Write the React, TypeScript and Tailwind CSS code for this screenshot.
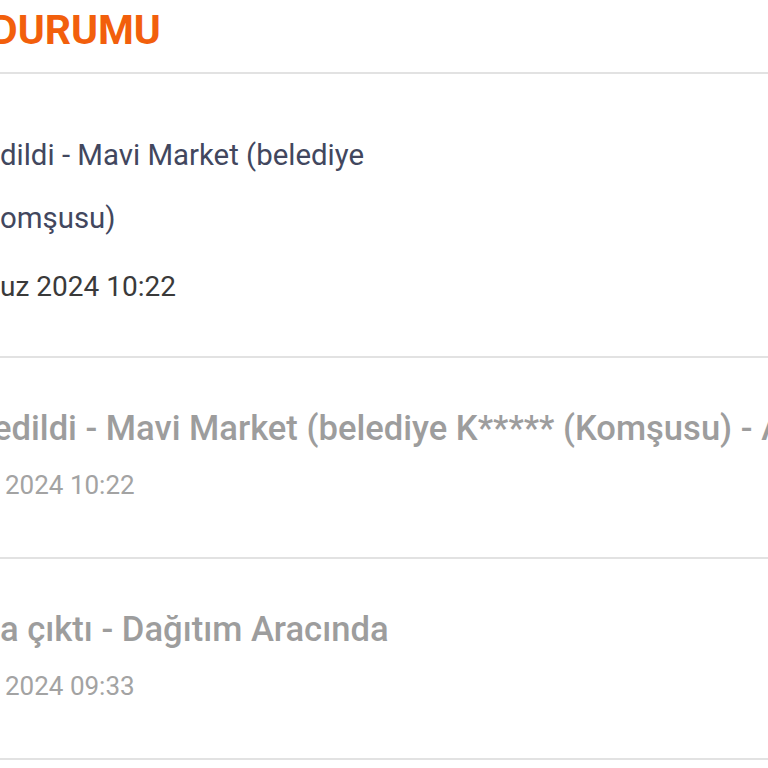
import React from 'react';

interface TrackingStep {
  text: string;
  date: string;
  offset: string;
}

const pastSteps: TrackingStep[] = [
  { text: 'edildi - Mavi Market (belediye K***** (Komşusu) - Adrese Teslim', date: '2024 10:22', offset: '-ml-[7px]' },
  { text: 'a çıktı - Dağıtım Aracında', date: '2024 09:33', offset: 'ml-0' },
];

const StepRow: React.FC<{ step: TrackingStep }> = ({ step }) => (
  <div className="border-b-2 border-[#e2e2e2] pt-[50px] pb-[56px]">
    <p className={`${step.offset} whitespace-nowrap text-[34.6px] leading-[40px] font-medium text-[#9d9d9d]`}>
      {step.text}
    </p>
    <p className="mt-[21px] pl-[5px] whitespace-nowrap text-[26px] leading-[32px] text-[#a3a3a3]">{step.date}</p>
  </div>
);

const App: React.FC = () => {
  return (
    <div className="h-[768px] w-[768px] overflow-hidden bg-white font-['Roboto',sans-serif]">
      <div className="border-b-2 border-[#e2e2e2] pt-[6px] pb-[18px]">
        <h1 className="-ml-[9px] text-[41px] leading-[48px] font-bold text-[#f25f0c]">DURUMU</h1>
      </div>

      {/* current step */}
      <div className="border-b-2 border-[#e2e2e2] pt-[50px] pb-[38px]">
        <p className="text-[29.4px] leading-[63px] text-[#42475e]">
          dildi - Mavi Market (belediye
          <br />
          omşusu)
        </p>
        <p className="mt-[5px] text-[28px] leading-[63px] text-[#3a3a3a]">uz 2024 10:22</p>
      </div>

      {pastSteps.map((step, idx) => (
        <StepRow key={idx} step={step} />
      ))}
    </div>
  );
};

export default App;
